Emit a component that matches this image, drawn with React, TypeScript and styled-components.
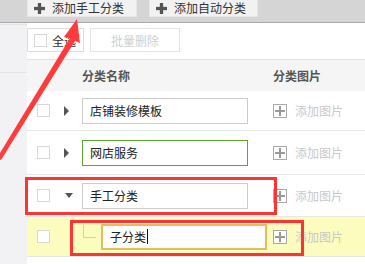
import styled, { createGlobalStyle } from 'styled-components';

const GlobalStyle = createGlobalStyle`
  body {
    margin: 0;
    font-family: "Noto Sans CJK SC", "Noto Sans", sans-serif;
    font-size: 12px;
    background: #fff;
  }
`;

const PageWrapper = styled.div`
  position: relative;
  width: 365px;
  height: 264px;
  overflow: hidden;
  display: flex;
  flex-direction: column;
`;

const TopBar = styled.div`
  height: 22px;
  flex-shrink: 0;
  background: #d5d5d5;
  border-bottom: 1px solid #a9a9a9;
  display: flex;
  align-items: flex-start;
  gap: 12px;
  padding-left: 27px;
`;

const TopButton = styled.div<{ $w: number }>`
  width: ${(p) => p.$w}px;
  height: 17px;
  box-sizing: border-box;
  background: #f2f2f2;
  border: 1px solid #e6e6e6;
  border-top: none;
  display: flex;
  align-items: center;
  gap: 7px;
  padding-left: 6px;
  color: #333;
  font-size: 12px;
  line-height: 1;
`;

const Body = styled.div`
  flex: 1;
  display: flex;
`;

const Sidebar = styled.div`
  width: 27px;
  flex-shrink: 0;
  background: #f2f2f5;
  display: flex;
  flex-direction: column;
`;

const SideLine = styled.div<{ $top: number }>`
  margin-top: ${(p) => p.$top}px;
  height: 1px;
  background: #e3e3e8;
`;

const Main = styled.div`
  flex: 1;
  display: flex;
  flex-direction: column;
  padding-top: 5px;
`;

const Toolbar = styled.div`
  display: flex;
  gap: 6px;
  height: 24px;
  margin-bottom: 7px;
`;

const SelectAll = styled.div`
  width: 57px;
  box-sizing: border-box;
  border: 1px solid #dcdcdc;
  display: flex;
  align-items: center;
  gap: 5px;
  padding-left: 6px;
  color: #333;
`;

const GhostButton = styled.div`
  width: 90px;
  box-sizing: border-box;
  border: 1px solid #e4e4e4;
  display: flex;
  align-items: center;
  justify-content: center;
  color: #cfcfcf;
`;

const Check = styled.span`
  width: 13px;
  height: 13px;
  box-sizing: border-box;
  border: 1px solid #d8d8d8;
  background: #fff;
  flex-shrink: 0;
`;

const Table = styled.div`
  border-top: 1px solid #e3e3e3;
  display: flex;
  flex-direction: column;
`;

const HeaderRow = styled.div`
  height: 31px;
  background: #f5f5f5;
  display: flex;
  align-items: center;
  font-weight: 700;
  color: #555;
`;

const Row = styled.div<{ $h: number; $active?: boolean }>`
  position: relative;
  height: ${(p) => p.$h}px;
  box-sizing: border-box;
  border-bottom: 1px solid #e6e6e6;
  background: ${(p) => (p.$active ? '#fbfcbe' : '#fff')};
  display: flex;
  align-items: center;
`;

const CheckCell = styled.div`
  width: 37px;
  padding-left: 10px;
  box-sizing: border-box;
  display: flex;
`;

const ToggleCell = styled.div`
  width: 18px;
  display: flex;
  align-items: center;
`;

const NameCell = styled.div`
  width: 191px;
  display: flex;
  align-items: center;
`;

const NameInput = styled.div<{ $border: string; $w?: number }>`
  width: ${(p) => p.$w ?? 166}px;
  height: 26px;
  box-sizing: border-box;
  border: 1px solid ${(p) => p.$border};
  background: #fff;
  display: flex;
  align-items: center;
  padding-left: 7px;
  color: #222;
  font-size: 12px;
`;

const Caret = styled.span`
  width: 1px;
  height: 15px;
  background: #111;
  margin-left: 1px;
`;

const Connector = styled.span`
  width: 13px;
  height: 13px;
  margin-left: 1px;
  margin-right: 5px;
  margin-top: -10px;
  box-sizing: border-box;
  border-left: 1px solid #cfcfcf;
  border-bottom: 1px solid #cfcfcf;
`;

const ImageCell = styled.div`
  display: flex;
  align-items: center;
  gap: 8px;
  color: #c9c9c9;
`;

const PlusBox = styled.span`
  position: relative;
  width: 14px;
  height: 14px;
  box-sizing: border-box;
  border: 1px solid #a8a8a8;
  background: #fff;
  display: flex;
  align-items: center;
  justify-content: center;
`;

const ArrowRight = styled.span`
  width: 0;
  height: 0;
  border-top: 5px solid transparent;
  border-bottom: 5px solid transparent;
  border-left: 5px solid #555;
`;

const ArrowDown = styled.span`
  width: 0;
  height: 0;
  margin-left: 1px;
  border-left: 4.5px solid transparent;
  border-right: 4.5px solid transparent;
  border-top: 5px solid #555;
`;

const RedBox = styled.div<{ $left: number; $top: number; $w: number; $h: number }>`
  position: absolute;
  left: ${(p) => p.$left}px;
  top: ${(p) => p.$top}px;
  width: ${(p) => p.$w}px;
  height: ${(p) => p.$h}px;
  box-sizing: border-box;
  border: 3px solid #ff3333;
  pointer-events: none;
`;

const ArrowOverlay = styled.svg`
  position: absolute;
  left: 0;
  top: 0;
  pointer-events: none;
`;

function PlusIcon({ color = '#999', size = 10, stroke = 2 }: { color?: string; size?: number; stroke?: number }) {
  return (
    <svg width={size} height={size} viewBox="0 0 10 10">
      <rect x={0} y={(10 - stroke) / 2} width={10} height={stroke} fill={color} />
      <rect x={(10 - stroke) / 2} y={0} width={stroke} height={10} fill={color} />
    </svg>
  );
}

function AddImage() {
  return (
    <ImageCell>
      <PlusBox>
        <PlusIcon color="#999" size={10} stroke={2} />
      </PlusBox>
      添加图片
    </ImageCell>
  );
}

export default function App() {
  return (
    <>
      <GlobalStyle />
      <PageWrapper>
        <TopBar>
          <TopButton $w={110}>
            <PlusIcon color="#555" size={11} stroke={3} />
            添加手工分类
          </TopButton>
          <TopButton $w={109}>
            <PlusIcon color="#555" size={11} stroke={3} />
            添加自动分类
          </TopButton>
        </TopBar>
        <Body>
          <Sidebar>
            <SideLine $top={1} />
            <SideLine $top={47} />
          </Sidebar>
          <Main>
            <Toolbar>
              <SelectAll>
                <Check />
                全选
              </SelectAll>
              <GhostButton>批量删除</GhostButton>
            </Toolbar>
            <Table>
              <HeaderRow>
                <CheckCell />
                <ToggleCell />
                <NameCell>分类名称</NameCell>
                <div>分类图片</div>
              </HeaderRow>
              <Row $h={40}>
                <CheckCell><Check /></CheckCell>
                <ToggleCell><ArrowRight /></ToggleCell>
                <NameCell><NameInput $border="#cccccc">店铺装修模板</NameInput></NameCell>
                <AddImage />
              </Row>
              <Row $h={44}>
                <CheckCell><Check /></CheckCell>
                <ToggleCell><ArrowRight /></ToggleCell>
                <NameCell><NameInput $border="#5aa92e">网店服务</NameInput></NameCell>
                <AddImage />
              </Row>
              <Row $h={42}>
                <CheckCell><Check /></CheckCell>
                <ToggleCell><ArrowDown /></ToggleCell>
                <NameCell><NameInput $border="#cccccc">手工分类</NameInput></NameCell>
                <AddImage />
                <RedBox $left={-2} $top={2} $w={252} $h={38} />
              </Row>
              <Row $h={40} $active>
                <CheckCell><Check /></CheckCell>
                <ToggleCell />
                <NameCell>
                  <Connector />
                  <NameInput $border="#e6bd5c" style={{ borderWidth: 2 }} $w={166}>
                    子分类<Caret />
                  </NameInput>
                </NameCell>
                <AddImage />
                <RedBox $left={43} $top={3} $w={234} $h={36} />
              </Row>
            </Table>
          </Main>
        </Body>
        <ArrowOverlay width={365} height={264} viewBox="0 0 365 264">
          <polygon points="77,19 80,43 75,41 1,160 -3,158 70,38 64,37" fill="#ff3b3b" />
        </ArrowOverlay>
      </PageWrapper>
    </>
  );
}
